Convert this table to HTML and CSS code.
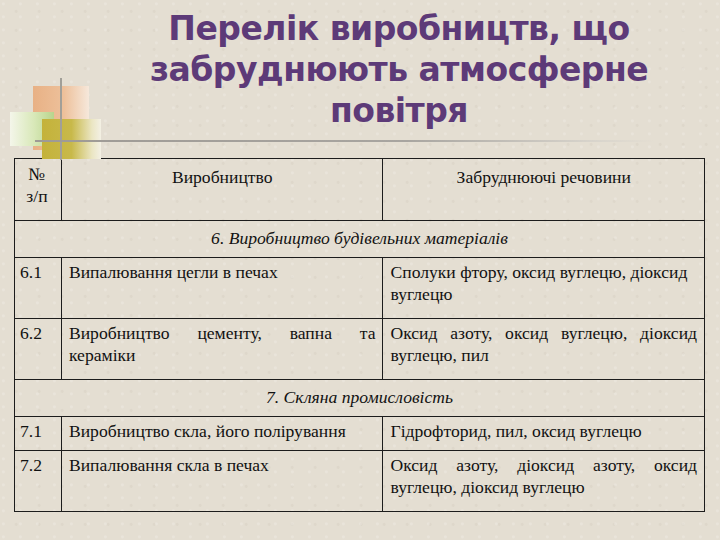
FILE: index.html
```html
<!DOCTYPE html>
<html lang="uk">
<head>
<meta charset="utf-8">
<link rel="stylesheet" href="styles.css">
</head>
<body>
<div class="slide">
  <header class="head">
    <div class="deco">
      <div class="sq sq-orange"></div>
      <div class="sq sq-green"></div>
      <div class="sq sq-olive"></div>
      <div class="vline"></div>
      <div class="hline"></div>
    </div>
    <h1 class="title">Перелік виробництв, що забруднюють атмосферне повітря</h1>
  </header>
  <table class="tbl">
    <colgroup><col class="c1"><col class="c2"><col class="c3"></colgroup>
    <tr class="r-head">
      <td class="num">№<br>з/п</td>
      <td class="center">Виробництво</td>
      <td class="center">Забруднюючі речовини</td>
    </tr>
    <tr class="r-sec">
      <td colspan="3" class="sec">6. Виробництво будівельних матеріалів</td>
    </tr>
    <tr class="r-tall">
      <td class="num">6.1</td>
      <td>Випалювання цегли в печах</td>
      <td>Сполуки фтору, оксид вуглецю, діоксид вуглецю</td>
    </tr>
    <tr class="r-tall">
      <td class="num">6.2</td>
      <td class="just">Виробництво цементу, вапна та кераміки</td>
      <td class="just">Оксид азоту, оксид вуглецю, діоксид вуглецю, пил</td>
    </tr>
    <tr class="r-sec">
      <td colspan="3" class="sec">7. Скляна промисловість</td>
    </tr>
    <tr class="r-short">
      <td class="num">7.1</td>
      <td>Виробництво скла, його полірування</td>
      <td>Гідрофторид, пил, оксид вуглецю</td>
    </tr>
    <tr class="r-tall">
      <td class="num">7.2</td>
      <td>Випалювання скла в печах</td>
      <td class="just">Оксид азоту, діоксид азоту, оксид вуглецю, діоксид вуглецю</td>
    </tr>
  </table>
</div>
</body>
</html>
```
FILE: styles.css
```css
html, body {
  margin: 0;
  padding: 0;
}
body {
  background: #e2dcd0;
}
.slide {
  width: 720px;
  height: 540px;
  overflow: hidden;
  background-color: #e4ded2;
  background-image:
    radial-gradient(circle at 20% 30%, rgba(255,255,255,0.18) 0 1px, transparent 2px),
    radial-gradient(circle at 70% 60%, rgba(170,160,140,0.10) 0 1px, transparent 2px);
  background-size: 17px 13px, 23px 19px;
}
.head {
  position: relative;
  height: 158px;
  display: flex;
  justify-content: flex-start;
}
.deco {
  position: absolute;
  left: 0;
  top: 0;
  width: 720px;
  height: 158px;
}
.sq {
  position: absolute;
}
.sq-orange {
  left: 33px;
  top: 86px;
  width: 56px;
  height: 64px;
  background: linear-gradient(90deg, #e8b185 0%, #edc09a 55%, #f6e8db 100%);
}
.sq-olive {
  left: 42px;
  top: 119px;
  width: 59px;
  height: 40px;
  background: linear-gradient(90deg, #c4b23a 0%, #c8b94a 50%, #ebe6c4 85%, #f3f0e4 100%);
}
.sq-green {
  left: 10px;
  top: 112px;
  width: 44px;
  height: 34px;
  background: linear-gradient(90deg, #f4f6ea 0%, #d8e8b8 55%, #b8d48c 100%);
}
.vline {
  position: absolute;
  left: 60px;
  top: 78px;
  width: 2px;
  height: 82px;
  background: #a19f98;
}
.hline {
  position: absolute;
  left: 35px;
  top: 140px;
  width: 620px;
  height: 2px;
  background: linear-gradient(90deg, #9e9a95 0%, #a8a5a0 60%, #d8d4cc 90%, rgba(230,226,218,0) 100%);
}
.title {
  position: relative;
  margin: 8px 0 0 132px;
  width: 534px;
  font-family: "DejaVu Sans", "Liberation Sans", sans-serif;
  font-weight: bold;
  font-size: 33px;
  line-height: 41px;
  color: #5d3a78;
  text-align: center;
  letter-spacing: -0.5px;
}
.tbl {
  margin-left: 14px;
  width: 691px;
  border-collapse: collapse;
  font-family: "Liberation Serif", "Times New Roman", serif;
  font-size: 17.6px;
  line-height: 22px;
  color: #111;
}
.c1 { width: 47px; }
.c2 { width: 322px; }
.c3 { width: 322px; }
.tbl td {
  border: 1.5px solid #1c1c1c;
  vertical-align: top;
  padding: 3px 7px 0 7px;
  text-align: left;
}
.tbl td.num {
  padding-left: 5px;
}
.tbl td.center {
  text-align: center;
  padding-top: 7px;
}
.r-head td.num {
  padding-top: 4px;
  text-align: center;
  padding-left: 0;
  padding-right: 2px;
}
.tbl td.sec {
  text-align: center;
  font-style: italic;
  padding-top: 6px;
}
.tbl td.just {
  text-align: justify;
}
.r-head { height: 62px; }
.r-sec { height: 37px; }
.r-tall { height: 61px; }
.r-short { height: 34px; }
```
